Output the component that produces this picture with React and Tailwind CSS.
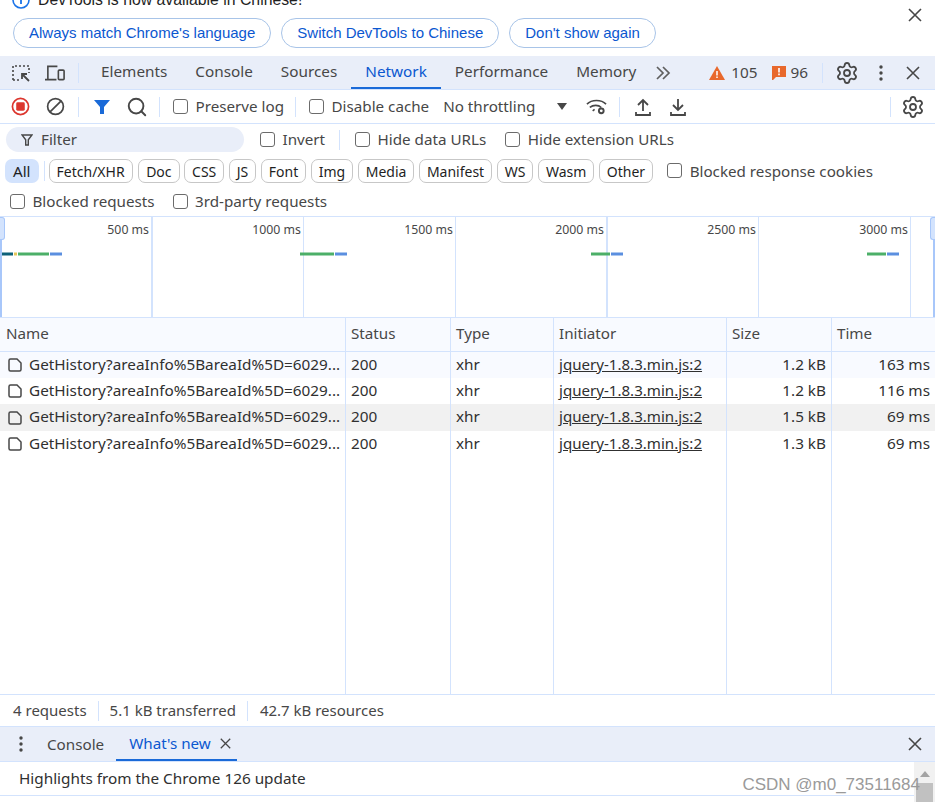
import { Search, Settings } from 'lucide-react';

const font = { fontFamily: '"Noto Sans", sans-serif' };

function Close({ className = '' }) {
  return (
    <svg viewBox="0 0 14 14" className={`h-[14px] w-[14px] ${className}`} fill="none" stroke="#474747" strokeWidth="1.6">
      <path d="M1 1l12 12M13 1L1 13" />
    </svg>
  );
}

function Dots() {
  return (
    <svg viewBox="0 0 4 16" className="h-4 w-1" fill="#474747">
      <circle cx="2" cy="2" r="1.7" />
      <circle cx="2" cy="8" r="1.7" />
      <circle cx="2" cy="14" r="1.7" />
    </svg>
  );
}

function Divider({ className = 'h-5' }) {
  return <div className={`w-px shrink-0 bg-[#d3e3fd] ${className}`} />;
}

function Check({ label, className = '' }) {
  return (
    <label className={`flex items-center gap-[7.5px] text-[15.2px] text-[#474747] ${className}`}>
      <span className="h-[15px] w-[15px] shrink-0 rounded-[3px] border border-[#6b6b6b] bg-white" />
      <span className="whitespace-nowrap">{label}</span>
    </label>
  );
}

function PillButton({ children }) {
  return (
    <button className="h-[30px] whitespace-nowrap rounded-full border border-[#a8c4e8] px-[15px] text-[15px] text-[#0b57d0]" style={{ fontFamily: '"Liberation Sans", sans-serif' }}>
      {children}
    </button>
  );
}

function Banner() {
  return (
    <div className="h-[56px] shrink-0 overflow-hidden bg-white">
      <div className="-mt-[10px] flex h-[20px] items-center pl-[12px] pr-[12px]">
        <svg viewBox="0 0 18 18" className="h-[18px] w-[18px]" fill="none">
          <circle cx="9" cy="9" r="8" stroke="#1a73e8" strokeWidth="1.6" />
          <path d="M9 8v5M9 4.5v1.8" stroke="#1a73e8" strokeWidth="1.8" />
        </svg>
        <span className="ml-[8px] text-[15.8px] text-[#1f1f1f]" style={{ fontFamily: '"Liberation Sans", sans-serif' }}>DevTools is now available in Chinese!</span>
        <Close className="ml-auto mt-[29px] mr-[1px]" />
      </div>
      <div className="mt-[8px] flex gap-[10px] pl-[13px]">
        <PillButton>Always match Chrome's language</PillButton>
        <PillButton>Switch DevTools to Chinese</PillButton>
        <PillButton>Don't show again</PillButton>
      </div>
    </div>
  );
}

const tabs = ['Elements', 'Console', 'Sources', 'Network', 'Performance', 'Memory'];

function TabBar() {
  return (
    <div className="flex h-[34px] shrink-0 items-center border-b border-[#d3e3fd] bg-[#e9eef9] text-[15.3px] text-[#474747]">
      <svg viewBox="0 0 20 20" className="ml-[11px] h-[20px] w-[20px]" fill="none" stroke="#474747" strokeWidth="1.6">
        <path d="M2 17V3h16v7" strokeDasharray="2 2" />
        <path d="M2 17h6" strokeDasharray="2 2" />
        <path d="M18 18l-7-7M11 16v-5h5" strokeWidth="1.8" />
      </svg>
      <svg viewBox="0 0 22 18" className="ml-[14px] h-[18px] w-[21px]" fill="none" stroke="#474747" strokeWidth="1.7">
        <path d="M3 15V2h10M0 16h12" />
        <rect x="14" y="6" width="6" height="10" rx="1" />
      </svg>
      <Divider className="ml-[12px] h-5" />
      <div className="ml-[8px] flex h-full">
        {tabs.map((tab) => (
          <div key={tab} className={`flex h-full items-center border-b-2 px-[14px] ${tab === 'Network' ? 'border-[#1a6ad8] text-[#0b57d0]' : 'border-transparent'}`}>
            {tab}
          </div>
        ))}
      </div>
      <svg viewBox="0 0 16 14" className="ml-[5px] h-[14px] w-[16px]" fill="none" stroke="#5f5f5f" strokeWidth="1.7">
        <path d="M2 1l6 6-6 6M8 1l6 6-6 6" />
      </svg>
      <svg viewBox="0 0 16 14" className="ml-[38px] h-[14px] w-[16px]">
        <path d="M8 0l8 14H0z" fill="#e8682c" />
        <path d="M8 5v4.5M8 10.5v1.5" stroke="#fff" strokeWidth="1.5" />
      </svg>
      <span className="ml-[6px]">105</span>
      <svg viewBox="0 0 14 14" className="ml-[14px] h-[14px] w-[14px]">
        <path d="M0 0h14v11H4l-3 3H0z" fill="#e8682c" />
        <path d="M7 2v4.5M7 7.5v1.7" stroke="#fff" strokeWidth="1.6" />
      </svg>
      <span className="ml-[5px]">96</span>
      <Divider className="ml-[14px] h-5" />
      <Settings size={24} strokeWidth={1.8} color="#474747" className="ml-[12px]" />
      <div className="ml-[20px]"><Dots /></div>
      <Close className="ml-[23px]" />
    </div>
  );
}

function Toolbar() {
  return (
    <div className="flex h-[34px] shrink-0 items-center border-b border-[#d3e3fd] text-[15.2px] text-[#474747]">
      <svg viewBox="0 0 20 20" className="ml-[11px] h-[19px] w-[19px]">
        <circle cx="10" cy="10" r="8.5" fill="none" stroke="#dc362e" strokeWidth="1.8" />
        <rect x="5.5" y="5.5" width="9" height="9" rx="1.5" fill="#dc362e" />
      </svg>
      <svg viewBox="0 0 20 20" className="ml-[16px] h-[19px] w-[19px]" fill="none" stroke="#474747" strokeWidth="1.8">
        <circle cx="10" cy="10" r="8.3" />
        <path d="M4 16L16 4" />
      </svg>
      <Divider className="ml-[13px] h-5" />
      <svg viewBox="0 0 16 16" className="ml-[15px] h-[16px] w-[16px]" fill="#1a6ad8">
        <path d="M0 1h16l-6 7v7H6V8z" />
      </svg>
      <Search size={22} strokeWidth={2.1} color="#474747" className="ml-[16px]" />
      <Divider className="ml-[11px] h-5" />
      <Check label="Preserve log" className="ml-[13px]" />
      <Divider className="ml-[11px] h-5" />
      <Check label="Disable cache" className="ml-[13px]" />
      <span className="ml-[14px] whitespace-nowrap">No throttling</span>
      <svg viewBox="0 0 10 7" className="ml-[22px] h-[7px] w-[10px]" fill="#474747">
        <path d="M0 0h10L5 7z" />
      </svg>
      <svg viewBox="0 0 22 18" className="ml-[19px] h-[18px] w-[21px]" fill="none" stroke="#474747" strokeWidth="1.7">
        <path d="M1 6c5-5 15-5 20 0M4 9.5c3.5-3 9-3 12 0M7 13l2-1.5" />
        <circle cx="16" cy="13" r="2.5" strokeWidth="2" />
      </svg>
      <Divider className="ml-[12px] h-5" />
      <svg viewBox="0 0 16 18" className="ml-[15px] h-[18px] w-[16px]" fill="none" stroke="#474747" strokeWidth="1.8">
        <path d="M8 13V2M3 7l5-5 5 5M1 14v3h14v-3" />
      </svg>
      <svg viewBox="0 0 16 18" className="ml-[19px] h-[18px] w-[16px]" fill="none" stroke="#474747" strokeWidth="1.8">
        <path d="M8 1v11M3 7l5 5 5-5M1 14v3h14v-3" />
      </svg>
      <Divider className="ml-auto h-5" />
      <Settings size={24} strokeWidth={1.8} color="#474747" className="ml-[10px] mr-[10px]" />
    </div>
  );
}

const chips = ['Fetch/XHR', 'Doc', 'CSS', 'JS', 'Font', 'Img', 'Media', 'Manifest', 'WS', 'Wasm', 'Other'];

function FilterBar() {
  return (
    <div className="h-[92px] shrink-0 text-[15.2px] text-[#474747]">
      <div className="flex items-center pt-[3px]">
        <div className="ml-[6px] flex h-[25px] w-[238px] items-center rounded-full bg-[#e9eef9]">
          <svg viewBox="0 0 12 12" className="ml-[15px] h-[12px] w-[12px]" fill="none" stroke="#474747" strokeWidth="1.4">
            <path d="M1 1h10L7.3 5.8V11H4.7V5.8z" />
          </svg>
          <span className="ml-[8px]">Filter</span>
        </div>
        <Check label="Invert" className="ml-[16px]" />
        <Divider className="ml-[14px] h-5" />
        <Check label="Hide data URLs" className="ml-[15px]" />
        <Check label="Hide extension URLs" className="ml-[19px]" />
      </div>
      <div className="mt-[7px] flex items-center">
        <div className="ml-[5px] flex h-[24px] items-center rounded-[7px] bg-[#d3e3fd] px-[8px] text-[#1f1f1f]">All</div>
        <Divider className="ml-[5px] h-5" />
        <div className="ml-[4px] flex gap-[4.5px]">
          {chips.map((chip) => (
            <div key={chip} className="flex h-[24px] items-center rounded-[7px] border border-[#c7c7c7] px-[7px] text-[14px] text-[#1f1f1f] first:mr-[1px]">{chip}</div>
          ))}
        </div>
        <Check label="Blocked response cookies" className="ml-[14px]" />
      </div>
      <div className="mt-[7px] flex items-center">
        <Check label="Blocked requests" className="ml-[10px]" />
        <Check label="3rd-party requests" className="ml-[18px]" />
      </div>
    </div>
  );
}

const ticks = [
  { label: '500 ms', thick: true, width: 'w-[153px]' },
  { label: '1000 ms', thick: false, width: 'w-[151px]' },
  { label: '1500 ms', thick: false, width: 'w-[152px]' },
  { label: '2000 ms', thick: true, width: 'w-[152px]' },
  { label: '2500 ms', thick: false, width: 'w-[151px]' },
  { label: '3000 ms', thick: false, width: 'w-[152px]' },
];

function Overview() {
  return (
    <div className="relative flex h-[102px] shrink-0 border-y border-[#d3e3fd] text-[12.3px] text-[#474747]">
      <div className="absolute left-0 top-0 h-full w-[2px] bg-[#a8c7fa]" />
      <div className="absolute left-0 top-0 h-[23px] w-[5px] rounded-r-[3px] border border-l-0 border-[#a8c7fa] bg-[#d3e3fd]" />
      <div className="absolute right-0 top-0 h-full w-[2px] bg-[#a8c7fa]" />
      <div className="absolute right-0 top-0 h-[23px] w-[5px] rounded-l-[3px] border border-r-0 border-[#a8c7fa] bg-[#d3e3fd]" />
      {ticks.map((tick) => (
        <div key={tick.label} className={`${tick.width} ${tick.thick ? 'border-r-2' : 'border-r'} border-[#d3e3fd] pr-[2px] pt-[4px] text-right`}>
          {tick.label}
        </div>
      ))}
      <svg viewBox="0 0 935 4" className="absolute left-0 top-[35px] h-[4px] w-[935px]">
        <rect x="2" y="0.5" width="11" height="3" fill="#0d6179" />
        <rect x="14" y="0.5" width="3" height="3" fill="#e5c75a" />
        <rect x="18" y="0.5" width="31" height="3" fill="#4caf68" />
        <rect x="50" y="0.5" width="12" height="3" fill="#5b8fe0" />
        <rect x="300" y="0.5" width="34" height="3" fill="#4caf68" />
        <rect x="335" y="0.5" width="12" height="3" fill="#5b8fe0" />
        <rect x="591" y="0.5" width="19" height="3" fill="#4caf68" />
        <rect x="611" y="0.5" width="12" height="3" fill="#5b8fe0" />
        <rect x="867" y="0.5" width="19" height="3" fill="#4caf68" />
        <rect x="887" y="0.5" width="12" height="3" fill="#5b8fe0" />
      </svg>
    </div>
  );
}

const columns = 'grid grid-cols-[346px_105px_103px_173px_105px_1fr]';
const cellBorder = 'border-r border-[#d3e3fd]';

const requests = [
  { size: '1.2 kB', time: '163 ms', bg: 'bg-[#f8faff]', height: 'h-[26px]' },
  { size: '1.2 kB', time: '116 ms', bg: 'bg-white', height: 'h-[26px]' },
  { size: '1.5 kB', time: '69 ms', bg: 'bg-[#f1f1f1]', height: 'h-[27px]' },
  { size: '1.3 kB', time: '69 ms', bg: 'bg-white', height: 'h-[26px]' },
];

function RequestRow({ row }) {
  return (
    <div className={`${columns} ${row.bg} ${row.height} items-stretch text-[15.3px] text-[#303030]`}>
      <div className={`flex items-center overflow-hidden pl-[8px] ${cellBorder}`}>
        <svg viewBox="0 0 14 14" className="h-[14px] w-[14px] shrink-0" fill="none" stroke="#474747" strokeWidth="1.5">
          <path d="M1 2.5A1.5 1.5 0 0 1 2.5 1H9l4 4v6.5A1.5 1.5 0 0 1 11.5 13h-9A1.5 1.5 0 0 1 1 11.5z" />
        </svg>
        <span className="ml-[7px] whitespace-nowrap pb-[2px]">GetHistory?areaInfo%5BareaId%5D=6029...</span>
      </div>
      <div className={`flex items-center pb-[2px] pl-[5px] ${cellBorder}`}>200</div>
      <div className={`flex items-center pb-[2px] pl-[5px] ${cellBorder}`}>xhr</div>
      <div className={`flex items-center pb-[2px] pl-[5px] text-[15.1px] underline ${cellBorder}`}>jquery-1.8.3.min.js:2</div>
      <div className={`flex items-center justify-end pb-[2px] pr-[5px] ${cellBorder}`}>{row.size}</div>
      <div className="flex items-center justify-end pb-[2px] pr-[5px]">{row.time}</div>
    </div>
  );
}

function RequestTable() {
  return (
    <div className="flex min-h-0 flex-1 flex-col border-b border-[#d3e3fd]">
      <div className={`${columns} h-[34px] shrink-0 border-b border-[#d3e3fd] bg-[#f8faff] text-[15.2px] text-[#474747]`}>
        {['Name', 'Status', 'Type', 'Initiator', 'Size', 'Time'].map((name, index) => (
          <div key={name} className={`flex items-center pb-[2px] ${index === 0 ? 'pl-[6px]' : 'pl-[5px]'} ${index < 5 ? cellBorder : ''}`}>{name}</div>
        ))}
      </div>
      {requests.map((row, index) => <RequestRow key={index} row={row} />)}
      <div className={`${columns} flex-1`}>
        {[0, 1, 2, 3, 4].map((i) => <div key={i} className={cellBorder} />)}
      </div>
    </div>
  );
}

function StatusBar() {
  return (
    <div className="flex h-[32px] shrink-0 items-center border-b border-[#d3e3fd] pl-[13px] text-[15px] text-[#474747]">
      <span>4 requests</span>
      <Divider className="ml-[11px] h-5" />
      <span className="ml-[11px]">5.1 kB transferred</span>
      <Divider className="ml-[11px] h-5" />
      <span className="ml-[12px]">42.7 kB resources</span>
    </div>
  );
}

function Drawer() {
  return (
    <div className="relative flex-none">
      <div className="flex h-[35px] items-center border-b border-[#d3e3fd] bg-[#e9eef9] text-[15.2px] text-[#474747]">
        <div className="ml-[19px]"><Dots /></div>
        <span className="ml-[24px]">Console</span>
        <div className="ml-[12px] flex h-full items-center border-b-2 border-[#1a6ad8] pl-[13px] pr-[6px] text-[#0b57d0]">
          What's new
          <Close className="ml-[9px] !h-[11px] !w-[11px]" />
        </div>
        <Close className="ml-auto mr-[13px]" />
      </div>
      <div className="flex h-[34px] items-center border-b border-[#d3e3fd] pl-[19px] text-[15.3px] text-[#303030]">
        Highlights from the Chrome 126 update
      </div>
      <div className="h-[6px]" />
      <div className="absolute bottom-0 right-0 top-[35px] w-[21px] bg-[#f1f1f1]">
        <svg viewBox="0 0 10 6" className="mx-auto mt-[9px] h-[6px] w-[10px]" fill="#a3a3a3">
          <path d="M5 0l5 6H0z" />
        </svg>
        <div className="mx-auto mt-[6px] h-[20px] w-[17px] bg-[#c1c1c1]" />
      </div>
      <span className="absolute bottom-[5px] right-[15px] text-[17px] text-[#9a9a9a]" style={{ fontFamily: '"Liberation Sans", sans-serif' }}>CSDN @m0_73511684</span>
    </div>
  );
}

export default function App() {
  return (
    <div className="flex h-screen w-full flex-col overflow-hidden bg-white" style={font}>
      <Banner />
      <TabBar />
      <Toolbar />
      <FilterBar />
      <Overview />
      <RequestTable />
      <StatusBar />
      <Drawer />
    </div>
  );
}
